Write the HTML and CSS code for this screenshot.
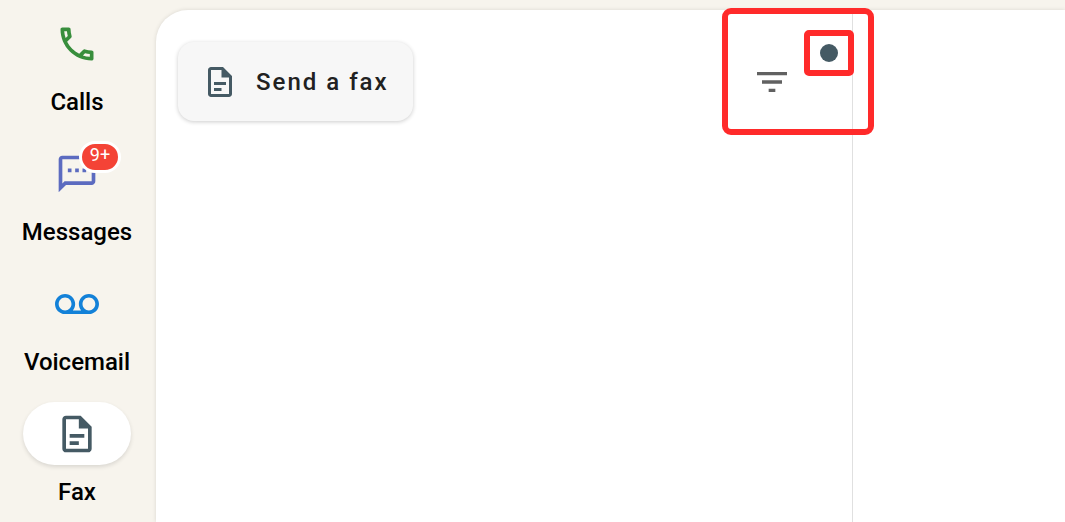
FILE: index.html
```html
<!DOCTYPE html>
<html lang="en">
<head>
  <meta charset="UTF-8">
  <meta name="viewport" content="width=device-width, initial-scale=1.0">
  <title>Fax</title>
  <link rel="stylesheet" href="styles.css">
</head>
<body>
  <div class="app">
    <nav class="sidebar">
      <a href="#calls" class="nav-item">
        <span class="nav-icon calls">
          <svg viewBox="0 0 24 24"><path d="M6.54 5c.06.89.21 1.76.45 2.59l-1.2 1.2c-.41-1.2-.67-2.47-.76-3.79h1.51m9.86 12.02c.85.24 1.72.39 2.6.45v1.49c-1.32-.09-2.59-.35-3.8-.75l1.2-1.19M7.5 3H4c-.55 0-1 .45-1 1 0 9.39 7.61 17 17 17 .55 0 1-.45 1-1v-3.49c0-.55-.45-1-1-1-1.24 0-2.45-.2-3.57-.57-.1-.04-.21-.05-.31-.05-.26 0-.51.1-.71.29l-2.2 2.2c-2.83-1.45-5.15-3.76-6.59-6.59l2.2-2.2c.28-.28.36-.67.25-1.02C8.7 6.45 8.5 5.25 8.5 4c0-.55-.45-1-1-1z"/></svg>
        </span>
        <span class="nav-label">Calls</span>
      </a>
      <a href="#messages" class="nav-item">
        <span class="nav-icon messages">
          <svg viewBox="0 0 24 24"><path d="M20 2H4c-1.100 0-2 .9-2 2v18l4-4h14c1.100 0 2-.9 2-2V4c0-1.100-.9-2-2-2zm0 14H5.200L4 17.200V4h16v12zM7 9h2v2H7zm4 0h2v2h-2zm4 0h2v2h-2z"/></svg>
          <span class="badge">9+</span>
        </span>
        <span class="nav-label">Messages</span>
      </a>
      <a href="#voicemail" class="nav-item">
        <span class="nav-icon voicemail">
          <svg viewBox="0 0 24 24"><path d="M18.500 6.500C15.460 6.500 13 8.960 13 12c0 1.330.47 2.550 1.260 3.500H9.740c.79-.95 1.260-2.170 1.260-3.500 0-3.040-2.460-5.500-5.500-5.500S0 8.960 0 12s2.460 5.500 5.500 5.500h13c3.040 0 5.500-2.460 5.500-5.500s-2.460-5.500-5.500-5.500zm-13 9C3.570 15.500 2 13.930 2 12s1.570-3.500 3.500-3.500S9 10.070 9 12s-1.570 3.500-3.500 3.500zm13 0c-1.930 0-3.500-1.570-3.500-3.500s1.570-3.500 3.500-3.500S22 10.070 22 12s-1.570 3.500-3.500 3.500z"/></svg>
        </span>
        <span class="nav-label">Voicemail</span>
      </a>
      <a href="#fax" class="nav-item active">
        <span class="nav-icon fax">
          <svg viewBox="0 0 24 24"><path fill-rule="evenodd" d="M14 2H6c-1.100 0-2 .9-2 2v16c0 1.100.9 2 2 2h12c1.100 0 2-.9 2-2V8l-6-6zM6 4h7v5h5v11H6V4zM8 12h8v2H8zM8 16h5v2H8z"/></svg>
        </span>
        <span class="nav-label">Fax</span>
      </a>
    </nav>

    <main class="content">
      <section class="list-pane">
        <div class="toolbar">
          <button type="button" class="send-button">
            <svg viewBox="0 0 24 24"><path fill-rule="evenodd" d="M14 2H6c-1.100 0-2 .9-2 2v16c0 1.100.9 2 2 2h12c1.100 0 2-.9 2-2V8l-6-6zM6 4h7v5h5v11H6V4zM8 12h8v2H8zM8 16h5v2H8z"/></svg>
            <span>Send a fax</span>
          </button>
          <div class="filter">
            <button type="button" class="filter-button" aria-label="Filter">
              <svg viewBox="0 0 24 24"><path d="M10 18h4v-2h-4v2zM3 6v2h18V6H3zm3 7h12v-2H6v2z"/></svg>
            </button>
            <span class="filter-dot"></span>
            <span class="highlight highlight-large"></span>
            <span class="highlight highlight-small"></span>
          </div>
        </div>
      </section>
      <section class="detail-pane"></section>
    </main>
  </div>
</body>
</html>
```

FILE: styles.css
```css
* {
  box-sizing: border-box;
  margin: 0;
  padding: 0;
}
body {
  font-family: Roboto, "Liberation Sans", sans-serif;
  background-color: #f7f4ed;
  color: #000;
  overflow: hidden;
}
svg {
  display: block;
  fill: currentColor;
}
button {
  font-family: inherit;
  border: none;
  cursor: pointer;
}
.app {
  display: flex;
  height: 100vh;
}

/* Sidebar */
.sidebar {
  flex: 0 0 156px;
  display: flex;
  flex-direction: column;
  align-items: center;
  gap: 26px;
  padding: 12px 2px 0 0;
}
.nav-item {
  display: flex;
  flex-direction: column;
  align-items: center;
  gap: 13px;
  color: #000;
  text-decoration: none;
}
.nav-icon {
  position: relative;
  display: flex;
  align-items: center;
  justify-content: center;
  width: 108px;
  height: 63px;
  border-radius: 32px;
}
.nav-icon svg {
  width: 44px;
  height: 44px;
}
.nav-label {
  font-size: 24px;
  font-weight: 500;
  line-height: 28px;
}
.active .nav-icon {
  background-color: #fff;
  box-shadow: 0 2px 4px rgba(0,0,0,0.12);
}
.calls {
  color: #388e3c;
}
.messages {
  color: #5c6bc0;
}
.voicemail {
  color: #1381d8;
}
.fax {
  color: #455a64;
}
.badge {
  position: absolute;
  top: -1px;
  left: 56px;
  width: 42px;
  height: 32px;
  border: 3px solid #fff;
  border-radius: 16px;
  background-color: #f44336;
  color: #fff;
  font-size: 18px;
  line-height: 22px;
  text-align: center;
}

/* Content */
.content {
  flex: 1;
  display: grid;
  grid-template-columns: 23fr 7fr;
  margin-top: 10px;
  background-color: #fff;
  border-top-left-radius: 32px;
  box-shadow: 0 0 4px rgba(0,0,0,0.12);
}
.list-pane {
  border-right: 1px solid #e0e0e0;
}
.toolbar {
  display: flex;
  align-items: center;
  justify-content: space-between;
  padding: 32px 40px 0 22px;
}
.send-button {
  display: flex;
  align-items: center;
  gap: 18px;
  height: 79px;
  padding: 0 24px;
  border-radius: 16px;
  background-color: #f7f7f7;
  box-shadow: 0 1px 4px rgba(0,0,0,0.2);
  color: #212121;
  font-size: 24px;
  font-weight: 500;
  letter-spacing: 2px;
}
.send-button svg {
  width: 36px;
  height: 36px;
  color: #455a64;
}
.filter {
  position: relative;
}
.filter-button {
  display: flex;
  align-items: center;
  justify-content: center;
  width: 80px;
  height: 79px;
  background: none;
  color: #616161;
}
.filter-button svg {
  width: 40px;
  height: 40px;
}
.filter-dot {
  position: absolute;
  top: 2px;
  left: 88px;
  width: 18px;
  height: 18px;
  border-radius: 50%;
  background-color: #455a64;
}
.highlight {
  position: absolute;
  border: 6px solid #ff2a2a;
  pointer-events: none;
}
.highlight-large {
  top: -34px;
  left: -10px;
  width: 152px;
  height: 127px;
  border-radius: 9px;
}
.highlight-small {
  top: -12px;
  left: 72px;
  width: 50px;
  height: 46px;
  border-radius: 5px;
}
```
